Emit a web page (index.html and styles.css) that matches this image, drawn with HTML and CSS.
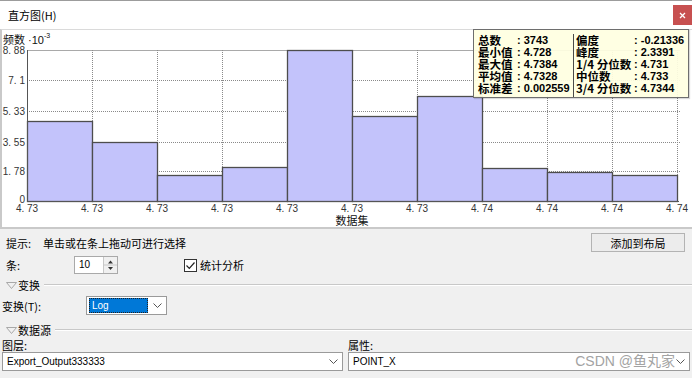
FILE: index.html
```html
<!DOCTYPE html>
<html lang="zh-CN">
<head>
    <meta charset="UTF-8">
    <title>直方图</title>
    <link rel="stylesheet" href="styles.css">
</head>
<body>
    <div class="window">
        <div class="titlebar">
            <span class="title">直方图(H)</span>
            <span class="close">
                <svg width="7" height="7" viewBox="0 0 7 7"><path d="M1 1L6 6M6 1L1 6" stroke="#fff" stroke-width="1.3"/></svg>
            </span>
        </div>

        <div class="chart">
            <svg class="plot" width="690" height="197" viewBox="2 30 690 197">
                <!-- grid -->
                <line x1="27" y1="50.5" x2="680" y2="50.5" stroke="#a9a9a9"/>
                <g stroke="#8a8a8a" stroke-dasharray="1 1">
                    <line x1="27" y1="80.5" x2="680" y2="80.5"/>
                    <line x1="27" y1="111.5" x2="680" y2="111.5"/>
                    <line x1="27" y1="142.5" x2="680" y2="142.5"/>
                    <line x1="27" y1="171.5" x2="680" y2="171.5"/>
                    <line x1="92.5" y1="50" x2="92.5" y2="201"/>
                    <line x1="157.5" y1="50" x2="157.5" y2="201"/>
                    <line x1="222.5" y1="50" x2="222.5" y2="201"/>
                    <line x1="287.5" y1="50" x2="287.5" y2="201"/>
                    <line x1="352.5" y1="50" x2="352.5" y2="201"/>
                    <line x1="417.5" y1="50" x2="417.5" y2="201"/>
                    <line x1="482.5" y1="50" x2="482.5" y2="201"/>
                    <line x1="547.5" y1="50" x2="547.5" y2="201"/>
                    <line x1="612.5" y1="50" x2="612.5" y2="201"/>
                    <line x1="677.5" y1="50" x2="677.5" y2="201"/>
                </g>

                <!-- bars -->
                <g fill="#c3c3fb" stroke="#4d4d4d" stroke-width="1.3">
                    <rect x="27.5" y="121.5" width="65" height="80"/>
                    <rect x="92.5" y="142.5" width="65" height="59"/>
                    <rect x="157.5" y="175.5" width="65" height="26"/>
                    <rect x="222.5" y="167.5" width="65" height="34"/>
                    <rect x="287.5" y="50.5" width="65" height="151"/>
                    <rect x="352.5" y="116.5" width="65" height="85"/>
                    <rect x="417.5" y="96.5" width="65" height="105"/>
                    <rect x="482.5" y="168.5" width="65" height="33"/>
                    <rect x="547.5" y="172.5" width="65" height="29"/>
                    <rect x="612.5" y="175.5" width="65" height="26"/>
                </g>

                <!-- axes -->
                <line x1="27.5" y1="50" x2="27.5" y2="202" stroke="#555"/>
                <line x1="27" y1="201.5" x2="679" y2="201.5" stroke="#555"/>

                <g class="tick" text-anchor="end">
                    <text x="25" y="53.5">8. 88</text>
                    <text x="25" y="84">7. 1</text>
                    <text x="25" y="115">5. 33</text>
                    <text x="25" y="146">3. 55</text>
                    <text x="25" y="175">1. 78</text>
                    <text x="25" y="203">0</text>
                </g>
                <g class="tick" text-anchor="middle">
                    <text x="27" y="211.5">4. 73</text>
                    <text x="92" y="211.5">4. 73</text>
                    <text x="157" y="211.5">4. 73</text>
                    <text x="222" y="211.5">4. 73</text>
                    <text x="287" y="211.5">4. 73</text>
                    <text x="352" y="211.5">4. 73</text>
                    <text x="417" y="211.5">4. 73</text>
                    <text x="482" y="211.5">4. 74</text>
                    <text x="547" y="211.5">4. 74</text>
                    <text x="612" y="211.5">4. 74</text>
                    <text x="677" y="211.5">4. 74</text>
                </g>

                <text class="axis-title" x="3" y="44">频数<tspan class="num" dx="3">·10</tspan><tspan class="sup" dy="-6">-3</tspan></text>
                <text class="axis-title" x="352" y="225" text-anchor="middle">数据集</text>
            </svg>

            <div class="stats">
                <div class="stats-col">
                    <span class="k">总数</span><span class="v">: 3743</span>
                    <span class="k">最小值</span><span class="v">: 4.728</span>
                    <span class="k">最大值</span><span class="v">: 4.7384</span>
                    <span class="k">平均值</span><span class="v">: 4.7328</span>
                    <span class="k">标准差</span><span class="v">: 0.002559</span>
                </div>
                <div class="stats-col stats-right">
                    <span class="k">偏度</span><span class="v">: -0.21336</span>
                    <span class="k">峰度</span><span class="v">: 2.3391</span>
                    <span class="k">1/4 分位数</span><span class="v">: 4.731</span>
                    <span class="k">中位数</span><span class="v">: 4.733</span>
                    <span class="k">3/4 分位数</span><span class="v">: 4.7344</span>
                </div>
            </div>
        </div>

        <div class="panel">
            <div class="row hint">
                <span class="hint-label">提示:</span>
                <span>单击或在条上拖动可进行选择</span>
                <button class="btn">添加到布局</button>
            </div>

            <div class="row bins">
                <span class="bins-label">条:</span>
                <span class="spinner">
                    <span class="spin-value">10</span>
                    <span class="spin-btns">
                        <svg width="13" height="16" viewBox="0 0 13 16">
                            <path d="M4 6.5L6.5 3.5L9 6.5Z" fill="#333"/>
                            <line x1="0" y1="8" x2="13" y2="8" stroke="#c8c8c8"/>
                            <path d="M4 10L6.5 13L9 10Z" fill="#333"/>
                        </svg>
                    </span>
                </span>
                <label class="check">
                    <span class="check-box">
                        <svg width="11" height="11" viewBox="0 0 11 11"><path d="M1.5 5.5L4.3 8.3L9.5 2.5" fill="none" stroke="#222" stroke-width="1.2"/></svg>
                    </span>
                    统计分析
                </label>
            </div>

            <div class="group">
                <svg class="tri" width="11" height="7" viewBox="0 0 11 7"><path d="M0.5 0.5H10.5L5.5 6.5Z" fill="none" stroke="#a8a8a8"/></svg>
                <span>变换</span>
                <span class="rule"></span>
            </div>

            <div class="row transform">
                <span class="field-label">变换(T):</span>
                <span class="combo combo-small">
                    <span class="sel">Log</span>
                    <svg class="chev" width="9" height="5" viewBox="0 0 9 5"><path d="M0.5 0.5L4.5 4.5L8.5 0.5" fill="none" stroke="#555"/></svg>
                </span>
            </div>

            <div class="group group-source">
                <svg class="tri" width="11" height="7" viewBox="0 0 11 7"><path d="M0.5 0.5H10.5L5.5 6.5Z" fill="none" stroke="#a8a8a8"/></svg>
                <span>数据源</span>
                <span class="rule"></span>
            </div>

            <div class="fields">
                <div class="field">
                    <span class="field-name">图层:</span>
                    <span class="combo">
                        <span class="combo-text">Export_Output333333</span>
                        <svg class="chev" width="9" height="5" viewBox="0 0 9 5"><path d="M0.5 0.5L4.5 4.5L8.5 0.5" fill="none" stroke="#555"/></svg>
                    </span>
                </div>
                <div class="field">
                    <span class="field-name">属性:</span>
                    <span class="combo">
                        <span class="combo-text">POINT_X</span>
                        <svg class="chev" width="9" height="5" viewBox="0 0 9 5"><path d="M0.5 0.5L4.5 4.5L8.5 0.5" fill="none" stroke="#555"/></svg>
                        <span class="watermark">CSDN @鱼丸家</span>
                    </span>
                </div>
            </div>
        </div>
    </div>
</body>
</html>
```

FILE: styles.css
```css
* {
    box-sizing: border-box;
}

body {
    margin: 0;
    background-color: #f0f0f0;
    font-family: "Liberation Sans", "Noto Sans CJK SC", sans-serif;
    font-size: 11px;
    color: #000;
}

.window {
    width: 692px;
    height: 378px;
    overflow: hidden;
}

.titlebar {
    position: relative;
    height: 29px;
    border-top: 1px solid #9c9c9c;
    background-color: #fff;
    display: flex;
    align-items: center;
    padding-left: 8px;
}

.title {
    font-family: "Noto Sans CJK SC", sans-serif;
    font-size: 11px;
}

.close {
    position: absolute;
    right: 0;
    top: 4px;
    width: 19px;
    height: 20px;
    background-color: #c75050;
    display: flex;
    align-items: center;
    justify-content: center;
}

.chart {
    position: relative;
    height: 200px;
    background-color: #fff;
    border-top: 1px solid #dadada;
    border-left: 2px solid #c9c9c9;
    border-bottom: 2px solid #c9c9c9;
}

.plot {
    display: block;
}

.tick {
    font-family: "Liberation Sans", sans-serif;
    font-size: 10px;
    fill: #333;
}

.axis-title {
    font-family: "Noto Sans CJK SC", sans-serif;
    font-size: 11px;
    fill: #111;
}

.axis-title .num {
    font-family: "Liberation Sans", sans-serif;
}

.axis-title .sup {
    font-family: "Liberation Sans", sans-serif;
    font-size: 7px;
}

.stats {
    position: absolute;
    left: 471px;
    top: -1px;
    width: 216px;
    height: 69px;
    background-color: rgba(255, 255, 225, 0.93);
    border: 1px solid #6e6e6e;
    box-shadow: 1px 1px 1px rgba(0, 0, 0, 0.15);
    display: flex;
    padding-top: 4px;
    font-weight: bold;
}

.stats-col {
    width: 100px;
    padding-left: 4px;
    border-right: 1px solid #4a4a4a;
    display: grid;
    grid-template-columns: 39px auto;
    grid-auto-rows: 12px;
    align-content: start;
    line-height: 12px;
    white-space: nowrap;
}

.stats-right {
    width: auto;
    flex: 1;
    padding-left: 2px;
    border-right: none;
    grid-template-columns: 58px auto;
}

.stats .k {
    font-family: "Noto Sans CJK SC", sans-serif;
    font-size: 11.5px;
}

.stats .v {
    font-family: "Liberation Sans", sans-serif;
    font-size: 11px;
}

.panel {
    height: 149px;
    padding-top: 4px;
    font-family: "Noto Sans CJK SC", sans-serif;
}

.row {
    display: flex;
    align-items: center;
}

.hint {
    height: 19px;
    padding-left: 6px;
    padding-right: 7px;
}

.hint-label {
    width: 37px;
}

.btn {
    margin-left: auto;
    width: 94px;
    height: 19px;
    padding: 0;
    border: 1px solid #b3b3b3;
    background-color: #ececec;
    font-family: "Noto Sans CJK SC", sans-serif;
    font-size: 11px;
    color: #000;
}

.bins {
    height: 18px;
    margin-top: 4px;
    padding-left: 6px;
}

.bins-label {
    width: 68px;
}

.spinner {
    display: flex;
    height: 18px;
    width: 44px;
    border: 1px solid #a9a9a9;
    background-color: #fff;
}

.spin-value {
    width: 29px;
    padding-left: 4px;
    font-family: "Liberation Sans", sans-serif;
    font-size: 10px;
    line-height: 16px;
}

.spin-btns {
    flex: 1;
    border-left: 1px solid #c8c8c8;
    background-color: #f0f0f0;
    display: flex;
}

.check {
    display: flex;
    align-items: center;
    margin-left: 66px;
}

.check-box {
    width: 13px;
    height: 13px;
    border: 1px solid #333;
    background-color: #fff;
    margin-right: 3px;
    display: flex;
    align-items: center;
    justify-content: center;
}

.group {
    height: 14px;
    margin-top: 4px;
    padding-left: 6px;
    display: flex;
    align-items: center;
}

.group-source {
    margin-top: 8px;
}

.tri {
    margin-right: 1px;
}

.rule {
    flex: 1;
    margin-left: 4px;
    border-top: 1px solid #c8c8c8;
    border-bottom: 1px solid #fff;
}

.transform {
    height: 19px;
    margin-top: 4px;
    padding-left: 2px;
}

.field-label {
    width: 84px;
}

.combo {
    position: relative;
    display: flex;
    align-items: center;
    height: 19px;
    border: 1px solid #9a9a9a;
    background-color: #fff;
    font-family: "Liberation Sans", sans-serif;
    font-size: 10px;
}

.combo-small {
    width: 81px;
    padding-left: 2px;
}

.sel {
    width: 59px;
    height: 15px;
    line-height: 13px;
    padding-left: 2px;
    background-color: #0078d7;
    border: 1px dotted #222;
    color: #fff;
}

.chev {
    margin-left: auto;
    margin-right: 4px;
}

.fields {
    display: grid;
    grid-template-columns: 341px 342px;
    column-gap: 5px;
    padding-left: 2px;
    margin-top: 1px;
}

.field-name {
    display: block;
    height: 14px;
    line-height: 14px;
}

.combo-text {
    padding-left: 4px;
}

.watermark {
    position: absolute;
    right: 14px;
    top: 0;
    line-height: 17px;
    font-family: "Liberation Sans", "Noto Sans CJK SC", sans-serif;
    font-size: 14px;
    color: #a3a3a3;
}
```
